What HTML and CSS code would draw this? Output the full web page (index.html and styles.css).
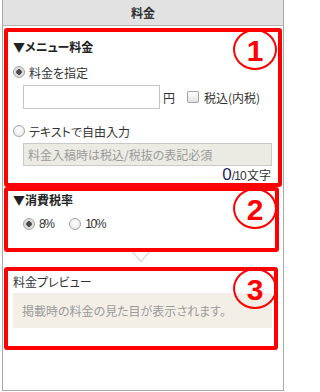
FILE: index.html
```html
<!DOCTYPE html>
<html lang="ja">
<head>
<meta charset="utf-8">
<title>料金</title>
<link rel="stylesheet" href="styles.css">
</head>
<body>
<div class="panel">
  <div class="panel-head">料金</div>

  <section class="box box-menu">
    <div class="badge">1</div>
    <h3 class="heading">▼メニュー料金</h3>
    <label class="radio-row">
      <input type="radio" name="mode" class="radio" checked>
      <span>料金を指定</span>
    </label>
    <div class="price-row">
      <input type="text" class="price-input">
      <span class="yen">円</span>
      <label class="check-label">
        <input type="checkbox" class="check">
        <span>税込(内税)</span>
      </label>
    </div>
    <label class="radio-row radio-row-free">
      <input type="radio" name="mode" class="radio">
      <span>テキストで自由入力</span>
    </label>
    <input type="text" class="free-input" placeholder="料金入稿時は税込/税抜の表記必須" disabled>
    <div class="counter"><span class="count">0</span><span class="count-max">/10</span><span class="count-unit">文字</span></div>
  </section>

  <section class="box box-tax">
    <div class="badge">2</div>
    <h3 class="heading heading-tax">▼消費税率</h3>
    <div class="tax-row">
      <label class="tax-opt">
        <input type="radio" name="tax" class="radio" checked>
        <span class="num">8%</span>
      </label>
      <label class="tax-opt">
        <input type="radio" name="tax" class="radio">
        <span class="num">10%</span>
      </label>
    </div>
  </section>

  <div class="arrow">
    <svg width="18" height="11" viewBox="0 0 18 11"><polyline points="0.5,0 9,9.5 17.5,0" fill="none" stroke="#dcdcdc" stroke-width="1.5"/></svg>
  </div>

  <section class="box box-preview">
    <div class="badge">3</div>
    <div class="preview-label">料金プレビュー</div>
    <div class="preview-box">掲載時の料金の見た目が表示されます。</div>
  </section>
</div>
</body>
</html>
```

FILE: styles.css
```css
* { box-sizing: border-box; }

html, body {
  margin: 0;
  padding: 0;
  background: #ffffff;
}

body {
  font-family: "Noto Sans CJK JP", "Noto Sans", sans-serif;
  font-size: 12px;
  color: #333333;
  font-feature-settings: "palt";
}

.panel {
  margin-left: 2px;
  width: 282px;
  height: 391px;
  border: 1px solid #a9a9a9;
  border-top: none;
}

.panel-head {
  height: 26px;
  line-height: 25px;
  background: #e2e2e2;
  border-bottom: 1px solid #b4b4b4;
  text-align: center;
  font-weight: bold;
  font-size: 12px;
  color: #333333;
}

.box {
  position: relative;
  margin-left: 1px;
  border: 4px solid #ff0000;
  border-radius: 3px;
}

.box-menu {
  margin-top: 2px;
  width: 278px;
  height: 159px;
}

.box-tax {
  width: 275px;
  height: 65px;
}

.box-preview {
  width: 274px;
  height: 83px;
}

.badge {
  position: absolute;
  left: 225px;
  top: -3px;
  width: 44px;
  height: 41px;
  border: 2px solid #ff0000;
  border-radius: 50%;
  display: flex;
  align-items: center;
  justify-content: center;
  font-family: "Liberation Sans", Arial, sans-serif;
  font-weight: bold;
  font-size: 30px;
  line-height: 1;
  color: #ff0000;
  padding-top: 2px;
}

.heading {
  margin: 5px 0 0 5px;
  font-size: 12px;
  line-height: 20px;
  font-weight: bold;
  color: #222222;
}

.heading-tax {
  margin-top: 0;
  line-height: 18px;
}

.radio-row {
  display: flex;
  align-items: center;
  gap: 4px;
  margin: 5px 0 0 5px;
  height: 20px;
}

.radio-row-free {
  margin-top: 12px;
}

.radio {
  -webkit-appearance: none;
  appearance: none;
  margin: 0;
  width: 12px;
  height: 12px;
  border: 1px solid #a3a3a3;
  border-radius: 50%;
  background: radial-gradient(circle at 50% 40%, #ffffff 0%, #e4e4e4 100%);
  flex: none;
}

.radio:checked {
  background: radial-gradient(circle, #4a4a4a 0, #4a4a4a 2.5px, #d8d8d8 3px, #ececec 100%);
}

.price-row {
  display: flex;
  align-items: center;
  margin: 3px 0 0 15px;
  height: 24px;
}

.price-input {
  width: 137px;
  height: 24px;
  margin: 0;
  border: 1px solid #c6c6c6;
  background: #ffffff;
  padding: 0 4px;
}

.yen {
  margin-left: 3px;
}

.check-label {
  display: flex;
  align-items: center;
  gap: 5px;
  margin-left: 12px;
}

.check {
  -webkit-appearance: none;
  appearance: none;
  margin: 0;
  width: 12px;
  height: 12px;
  border: 1px solid #a3a3a3;
  border-radius: 2px;
  background: linear-gradient(#ffffff, #e2e2e2);
}

.free-input {
  display: block;
  margin: 2px 0 0 15px;
  width: 249px;
  height: 23px;
  border: 1px solid #c9c9c9;
  background: #ebebe4;
  padding: 0 4px;
  font-family: inherit;
  font-size: 12px;
  font-feature-settings: "palt";
}

.free-input::placeholder {
  color: #9a9a9a;
}

.counter {
  height: 17px;
  padding-right: 7px;
  display: flex;
  justify-content: flex-end;
  align-items: baseline;
  line-height: 17px;
}

.count {
  font-size: 17px;
  color: #25255a;
  font-family: "Liberation Sans", Arial, sans-serif;
}

.count-max {
  font-family: "Liberation Sans", Arial, sans-serif;
  font-size: 12px;
  letter-spacing: -0.8px;
  margin-right: 1px;
}

.count-unit {
  font-size: 12px;
}

.tax-row {
  display: flex;
  align-items: center;
  gap: 16px;
  margin: 5px 0 0 15px;
  height: 20px;
}

.tax-opt {
  display: flex;
  align-items: center;
  gap: 4px;
}

.num {
  font-family: "Liberation Sans", Arial, sans-serif;
  font-size: 12px;
  letter-spacing: -1.5px;
}

.arrow {
  height: 15px;
  padding-left: 129px;
  line-height: 0;
}

.preview-label {
  margin: 1px 0 0 5px;
  line-height: 20px;
}

.preview-box {
  margin: 1px 0 0 5px;
  width: 259px;
  height: 35px;
  background: #f3efe7;
  color: #9a9a9a;
  padding-left: 9px;
  line-height: 35px;
}
```
